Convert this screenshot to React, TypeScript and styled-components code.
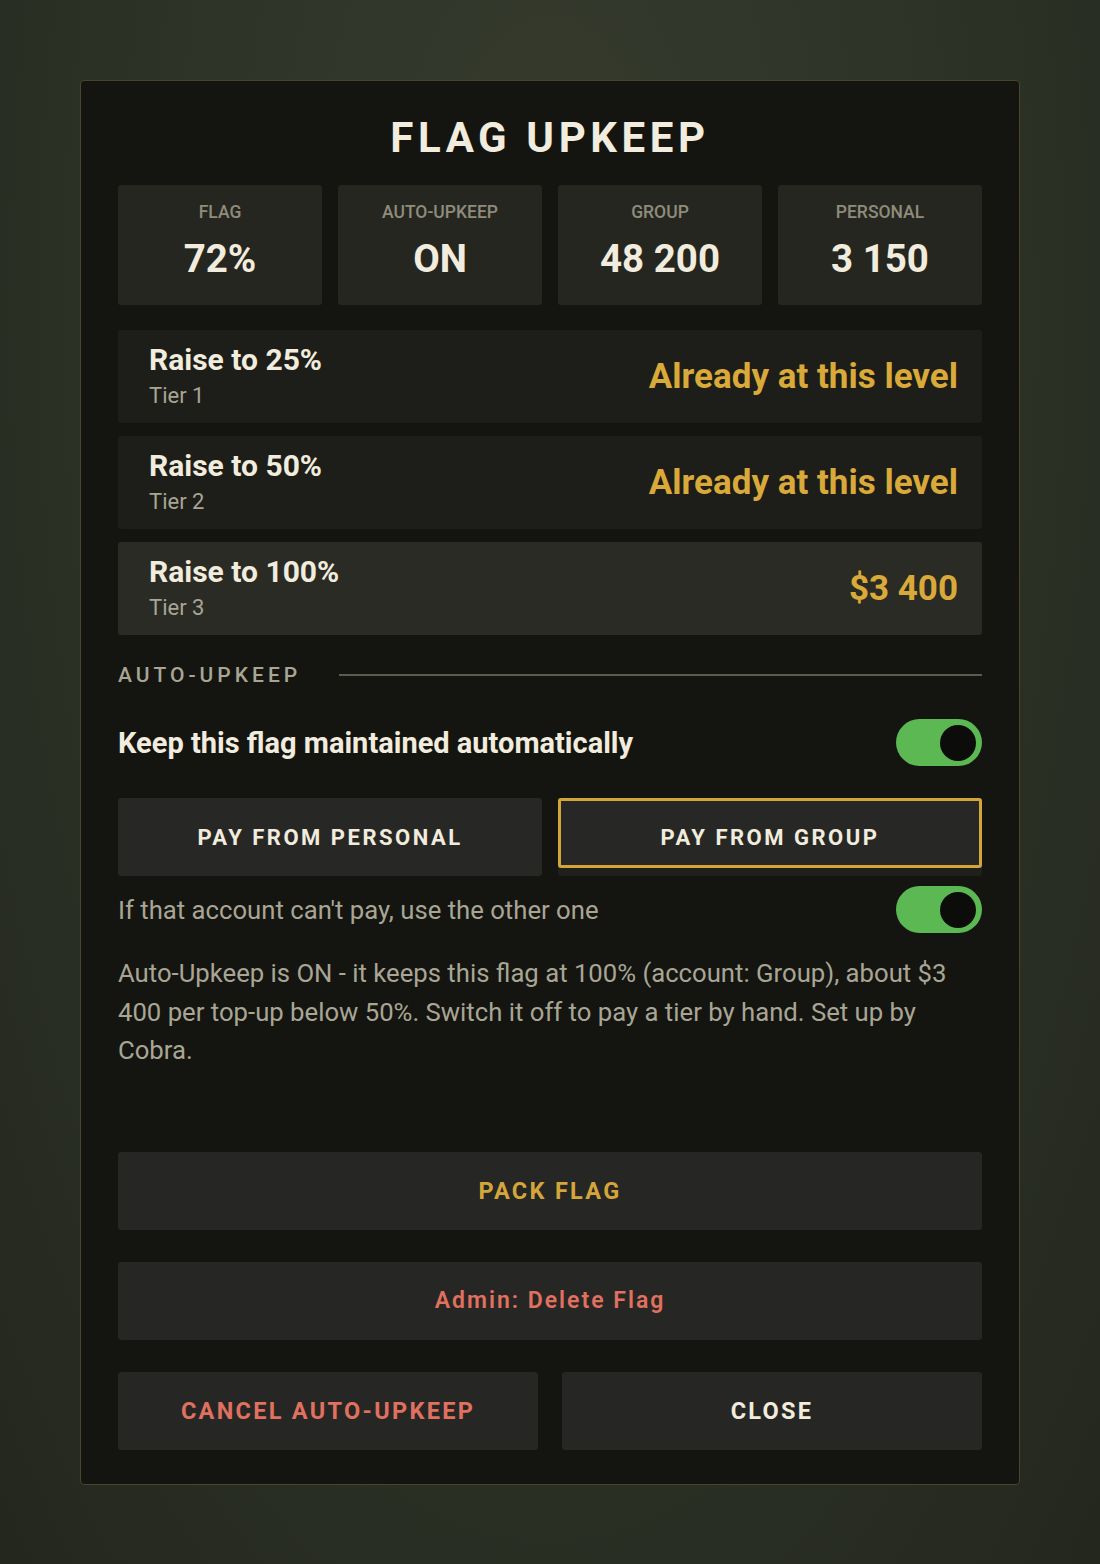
import styled, { createGlobalStyle } from 'styled-components';

const GlobalStyle = createGlobalStyle`
    html, body {
        margin: 0;
        padding: 0;
    }
    body {
        min-height: 1564px;
        background: radial-gradient(ellipse at 50% 20%, #363b2e 0%, #2f3428 45%, #23271e 100%);
        font-family: Roboto, "Noto Sans", sans-serif;
    }
    *, *::before, *::after {
        box-sizing: border-box;
    }
`;

const Page = styled.div`
    padding: 80px 80px;
    display: flex;
    justify-content: center;
`;

const Modal = styled.div`
    width: 940px;
    background-color: #141510;
    border: 1px solid #4d4529;
    border-radius: 4px;
    padding: 33px 37px 34px;
    display: flex;
    flex-direction: column;
`;

const Title = styled.h1`
    margin: 0 0 23px;
    text-align: center;
    font-size: 42px;
    line-height: 48px;
    font-weight: 700;
    letter-spacing: 4.6px;
    color: #f1ecdd;
`;

const StatGrid = styled.div`
    display: grid;
    grid-template-columns: repeat(4, 1fr);
    gap: 16px;
    margin-bottom: 25px;
`;

const StatCard = styled.div`
    height: 120px;
    background-color: #262620;
    border-radius: 3px;
    display: flex;
    flex-direction: column;
    align-items: center;
    padding-top: 16px;
`;

const StatLabel = styled.span`
    font-size: 17.5px;
    line-height: 22px;
    font-weight: 500;
    color: #8f8c7c;
    text-transform: uppercase;
`;

const StatValue = styled.span`
    margin-top: 14px;
    font-size: 38.5px;
    line-height: 44px;
    font-weight: 700;
    color: #f1ecdd;
`;

const TierList = styled.div`
    display: flex;
    flex-direction: column;
    gap: 13px;
`;

const TierRow = styled.div<{ $active?: boolean }>`
    height: 93px;
    background-color: ${p => (p.$active ? '#2a2b25' : '#1d1e19')};
    border-radius: 3px;
    display: flex;
    align-items: center;
    justify-content: space-between;
    padding: 0 24px 0 31px;
`;

const TierInfo = styled.div`
    display: flex;
    flex-direction: column;
`;

const TierTitle = styled.span`
    font-size: 30px;
    line-height: 32px;
    font-weight: 700;
    color: #f1ecdd;
`;

const TierSub = styled.span`
    margin-top: 7px;
    font-size: 22px;
    line-height: 26px;
    color: #a9a595;
`;

const TierStatus = styled.span`
    font-size: 35px;
    font-weight: 700;
    color: #d9a93a;
`;

const SectionHead = styled.div`
    margin-top: 28px;
    display: flex;
    align-items: center;
    gap: 38px;
`;

const SectionLabel = styled.span`
    font-size: 21px;
    line-height: 24px;
    font-weight: 500;
    letter-spacing: 4px;
    color: #a9a595;
`;

const SectionLine = styled.div`
    flex: 1;
    height: 2px;
    background-color: #5c5b52;
`;

const ToggleRow = styled.div<{ $gap: number }>`
    margin-top: ${p => p.$gap}px;
    display: flex;
    align-items: center;
    justify-content: space-between;
`;

const ToggleLabel = styled.span<{ $strong?: boolean }>`
    font-size: ${p => (p.$strong ? 29 : 25.7)}px;
    font-weight: ${p => (p.$strong ? 700 : 400)};
    color: ${p => (p.$strong ? '#f1ecdd' : '#a9a595')};
`;

const Switch = styled.div`
    width: 86px;
    height: 47px;
    border-radius: 24px;
    background-color: #5cb853;
    display: flex;
    align-items: center;
    justify-content: flex-end;
    padding-right: 6px;
`;

const Knob = styled.div`
    width: 36px;
    height: 36px;
    border-radius: 50%;
    background-color: #0c0d0a;
`;

const PayRow = styled.div`
    margin-top: 32px;
    display: grid;
    grid-template-columns: 1fr 1fr;
    gap: 16px;
`;

const PayButton = styled.button<{ $selected?: boolean }>`
    position: relative;
    height: 78px;
    background: ${p => (p.$selected ? 'linear-gradient(#272826 70px, #1f201c 70px)' : '#272826')};
    border: none;
    border-radius: 3px;
    font-family: inherit;
    font-size: 22px;
    font-weight: 700;
    letter-spacing: 2.5px;
    color: #f1ecdd;
    text-transform: uppercase;
    &::after {
        content: '';
        display: ${p => (p.$selected ? 'block' : 'none')};
        position: absolute;
        left: 0;
        right: 0;
        top: 0;
        height: 70px;
        border: 3px solid #d4a53a;
        border-radius: 3px;
    }
`;

const Note = styled.p`
    margin: 21px 0 0;
    font-size: 25.7px;
    line-height: 38.5px;
    color: #a9a595;
`;

const ActionStack = styled.div`
    margin-top: 82px;
    display: flex;
    flex-direction: column;
    gap: 32px;
`;

const ActionRow = styled.div`
    display: grid;
    grid-template-columns: 1fr 1fr;
    gap: 24px;
`;

const ActionButton = styled.button<{ $tone: 'gold' | 'danger' | 'plain'; $upper?: boolean }>`
    height: 78px;
    width: 100%;
    background-color: #262624;
    border: none;
    border-radius: 3px;
    font-family: inherit;
    font-size: ${p => (p.$upper ? 23.5 : 23)}px;
    font-weight: ${p => (p.$upper ? 700 : 600)};
    letter-spacing: ${p => (p.$upper ? 2.3 : 2)}px;
    text-transform: ${p => (p.$upper ? 'uppercase' : 'none')};
    color: ${p => (p.$tone === 'gold' ? '#d4a53a' : p.$tone === 'danger' ? '#e0705f' : '#f1ecdd')};
`;

const stats = [
    { label: 'Flag', value: '72%' },
    { label: 'Auto-Upkeep', value: 'ON' },
    { label: 'Group', value: '48 200' },
    { label: 'Personal', value: '3 150' },
];

const tiers = [
    { title: 'Raise to 25%', tier: 'Tier 1', status: 'Already at this level' },
    { title: 'Raise to 50%', tier: 'Tier 2', status: 'Already at this level' },
    { title: 'Raise to 100%', tier: 'Tier 3', status: '$3 400', active: true },
];

const App = () => {
    return (
        <>
            <GlobalStyle />
            <Page>
                <Modal>
                    <Title>FLAG UPKEEP</Title>
                    <StatGrid>
                        {stats.map(s => (
                            <StatCard key={s.label}>
                                <StatLabel>{s.label}</StatLabel>
                                <StatValue>{s.value}</StatValue>
                            </StatCard>
                        ))}
                    </StatGrid>
                    <TierList>
                        {tiers.map(t => (
                            <TierRow key={t.title} $active={t.active}>
                                <TierInfo>
                                    <TierTitle>{t.title}</TierTitle>
                                    <TierSub>{t.tier}</TierSub>
                                </TierInfo>
                                <TierStatus>{t.status}</TierStatus>
                            </TierRow>
                        ))}
                    </TierList>
                    <SectionHead>
                        <SectionLabel>AUTO-UPKEEP</SectionLabel>
                        <SectionLine />
                    </SectionHead>
                    <ToggleRow $gap={32}>
                        <ToggleLabel $strong>Keep this flag maintained automatically</ToggleLabel>
                        <Switch><Knob /></Switch>
                    </ToggleRow>
                    <PayRow>
                        <PayButton>Pay from Personal</PayButton>
                        <PayButton $selected>Pay from Group</PayButton>
                    </PayRow>
                    <ToggleRow $gap={10}>
                        <ToggleLabel>If that account can't pay, use the other one</ToggleLabel>
                        <Switch><Knob /></Switch>
                    </ToggleRow>
                    <Note>
                        Auto-Upkeep is ON - it keeps this flag at 100% (account: Group), about $3 400 per top-up below 50%. Switch it off to pay a tier by hand. Set up by Cobra.
                    </Note>
                    <ActionStack>
                        <ActionButton $tone="gold" $upper>Pack Flag</ActionButton>
                        <ActionButton $tone="danger">Admin: Delete Flag</ActionButton>
                        <ActionRow>
                            <ActionButton $tone="danger" $upper>Cancel Auto-Upkeep</ActionButton>
                            <ActionButton $tone="plain" $upper>Close</ActionButton>
                        </ActionRow>
                    </ActionStack>
                </Modal>
            </Page>
        </>
    );
};

export default App;
